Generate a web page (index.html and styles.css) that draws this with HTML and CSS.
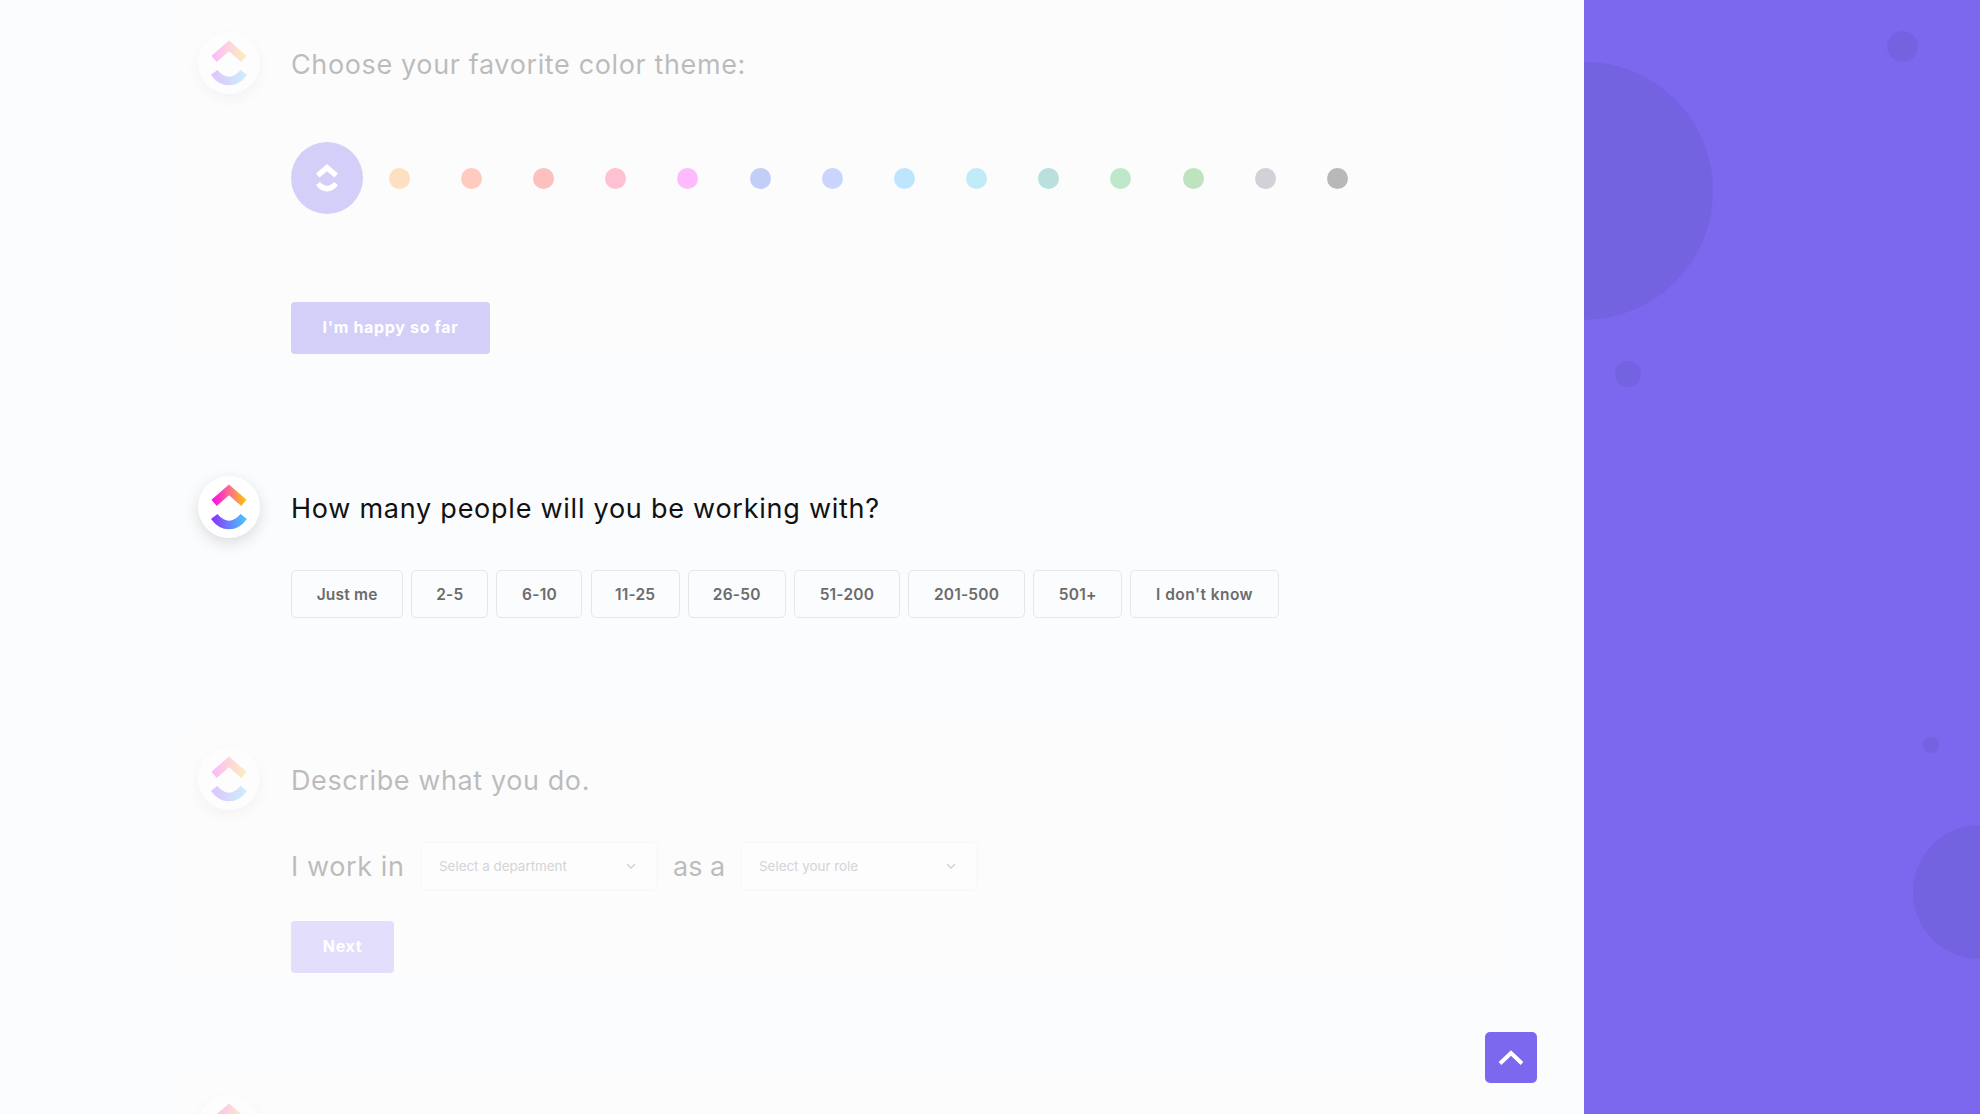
FILE: index.html
```
<!DOCTYPE html>
<html lang="en">
<head>
    <meta charset="UTF-8">
    <meta name="viewport" content="width=device-width, initial-scale=1.0">
    <title>Workspace setup</title>
    <link rel="stylesheet" href="styles.css">
</head>
<body>
    <!-- Shared logo shapes -->
    <svg class="defs" width="0" height="0" aria-hidden="true">
        <defs>
            <linearGradient id="grad-top" x1="0" y1="0" x2="1" y2="0">
                <stop offset="0" stop-color="#ff02f0"/>
                <stop offset="0.5" stop-color="#fb6c8f"/>
                <stop offset="1" stop-color="#ffc800"/>
            </linearGradient>
            <linearGradient id="grad-bottom" x1="0" y1="0" x2="1" y2="0">
                <stop offset="0" stop-color="#8930fd"/>
                <stop offset="1" stop-color="#49ccf9"/>
            </linearGradient>
            <symbol id="logo" viewBox="0 0 36 46">
                <path class="logo-top" d="M18 0.5 L0.5 15.7 L5.7 22 L18 11.2 L30.3 22 L35.5 15.7 Z"/>
                <path class="logo-bottom" d="M0 35 L6.4 30 Q18 43.3 29.6 30 L36 35 Q28.5 45.3 18 45.3 Q7.5 45.3 0 35 Z"/>
            </symbol>
        </defs>
    </svg>

    <div class="page">
        <main class="steps">
            <section class="step step-theme faded">
                <div class="avatar"><svg class="logo" width="36" height="46"><use href="#logo"/></svg></div>
                <div class="content">
                    <h2 class="title title-theme">Choose your favorite color theme:</h2>
                    <div class="colors">
                        <div class="color">
                            <span class="selected">
                                <svg class="logo-white" width="22" height="28" viewBox="0 0 22 28">
                                    <path d="M11 0 L0 9.6 L3.6 13.6 L11 7.3 L18.4 13.6 L22 9.6 Z"/>
                                    <path d="M0 21 L4 18 Q11 25.6 18 18 L22 21 Q17.5 27.5 11 27.5 Q4.5 27.5 0 21 Z"/>
                                </svg>
                            </span>
                        </div>
                        <div class="color"><span class="dot orange"></span></div>
                        <div class="color"><span class="dot coral"></span></div>
                        <div class="color"><span class="dot red"></span></div>
                        <div class="color"><span class="dot pink"></span></div>
                        <div class="color"><span class="dot magenta"></span></div>
                        <div class="color"><span class="dot indigo"></span></div>
                        <div class="color"><span class="dot blue"></span></div>
                        <div class="color"><span class="dot sky"></span></div>
                        <div class="color"><span class="dot cyan"></span></div>
                        <div class="color"><span class="dot teal"></span></div>
                        <div class="color"><span class="dot mint"></span></div>
                        <div class="color"><span class="dot green"></span></div>
                        <div class="color"><span class="dot grey"></span></div>
                        <div class="color"><span class="dot black"></span></div>
                    </div>
                    <button class="btn btn-happy">I'm happy so far</button>
                </div>
            </section>

            <section class="step step-people">
                <div class="avatar"><svg class="logo" width="36" height="46"><use href="#logo"/></svg></div>
                <div class="content">
                    <h2 class="title title-people">How many people will you be working with?</h2>
                    <div class="options">
                        <button class="option">Just me</button>
                        <button class="option">2-5</button>
                        <button class="option">6-10</button>
                        <button class="option">11-25</button>
                        <button class="option">26-50</button>
                        <button class="option">51-200</button>
                        <button class="option">201-500</button>
                        <button class="option">501+</button>
                        <button class="option option-unknown">I don't know</button>
                    </div>
                </div>
            </section>

            <section class="step step-job faded">
                <div class="avatar"><svg class="logo" width="36" height="46"><use href="#logo"/></svg></div>
                <div class="content">
                    <h2 class="title title-job">Describe what you do.</h2>
                    <div class="job-row">
                        <span class="word word-in">I work in</span>
                        <div class="select"><span class="placeholder">Select a department</span>
                            <svg class="caret" width="10" height="6" viewBox="0 0 10 6"><path d="M1 1 L5 5 L9 1"/></svg>
                        </div>
                        <span class="word word-as">as a</span>
                        <div class="select"><span class="placeholder">Select your role</span>
                            <svg class="caret" width="10" height="6" viewBox="0 0 10 6"><path d="M1 1 L5 5 L9 1"/></svg>
                        </div>
                    </div>
                    <button class="btn btn-next">Next</button>
                </div>
            </section>

            <section class="step step-last faded">
                <div class="avatar"><svg class="logo" width="36" height="46"><use href="#logo"/></svg></div>
            </section>

            <button class="to-top" aria-label="Back to top">
                <svg width="26" height="16" viewBox="0 0 26 16"><path d="M2 14.5 L13 4 L24 14.5"/></svg>
            </button>
        </main>

        <aside class="side">
            <svg width="396" height="1114" viewBox="0 0 396 1114">
                <circle cx="0" cy="190.7" r="129"/>
                <circle cx="318.5" cy="46.4" r="15.5"/>
                <circle cx="44" cy="374" r="13"/>
                <circle cx="347" cy="745" r="8"/>
                <circle cx="396" cy="892" r="67"/>
            </svg>
        </aside>
    </div>
</body>
</html>
```

FILE: styles.css
```
* {
    margin: 0;
    padding: 0;
    box-sizing: border-box;
}

body {
    font-family: Inter, "Liberation Sans", sans-serif;
    background: #fafcfe;
    color: #111;
    overflow: hidden;
}

.defs {
    position: absolute;
}

.page {
    display: flex;
    height: 1114px;
    overflow: hidden;
}

/* Left column */
.steps {
    position: relative;
    width: 1584px;
    padding: 0 83px 0 182px;
}

.step {
    display: flex;
    align-items: flex-start;
    padding-left: 15.5px;
}

.faded {
    background: #fcfcfc;
}

.faded .title,
.faded .word,
.faded .logo {
    opacity: 0.27;
}

.step-theme {
    height: 355px;
    padding-top: 31.5px;
    margin-bottom: 120.5px;
}

.step-people {
    height: 142px;
    margin-bottom: 110px;
}

.step-job {
    height: 245px;
    padding-top: 20px;
    margin-bottom: 102px;
}

.step-last {
    height: 200px;
    padding-top: 20px;
}

.avatar {
    display: flex;
    align-items: center;
    justify-content: center;
    flex: none;
    width: 62px;
    height: 62px;
    margin-right: 31.5px;
    border-radius: 50%;
    background: #fff;
    box-shadow: 0 5px 15px rgba(0, 0, 0, 0.13);
}

.faded .avatar {
    background: #fdfdfd;
    box-shadow: 0 5px 15px rgba(0, 0, 0, 0.04);
}

.logo-top {
    fill: url(#grad-top);
}

.logo-bottom {
    fill: url(#grad-bottom);
}

.logo-white path {
    fill: #fff;
}

.title {
    height: 66px;
    line-height: 66px;
    font-size: 27px;
    font-weight: 400;
    white-space: nowrap;
}

.title-theme { letter-spacing: 0.63px; }
.title-people { letter-spacing: 0.75px; }
.title-job { letter-spacing: 0.6px; }

/* Color themes */
.colors {
    display: flex;
    height: 72px;
    margin: 44.5px 0 87.5px;
}

.color {
    display: flex;
    align-items: center;
    justify-content: center;
    width: 72.18px;
}

.selected {
    display: flex;
    align-items: center;
    justify-content: center;
    width: 72px;
    height: 72px;
    border-radius: 50%;
    background: #d4cff8;
}

.dot {
    width: 21px;
    height: 21px;
    border-radius: 50%;
}

.orange { background: #fce0c0; }
.coral { background: #ffcabf; }
.red { background: #fdc0c0; }
.pink { background: #ffc0d2; }
.magenta { background: #ffbaff; }
.indigo { background: #c3cef6; }
.blue { background: #cad5fe; }
.sky { background: #bfe5fe; }
.cyan { background: #c0ebf7; }
.teal { background: #b9e0dc; }
.mint { background: #bfe8ca; }
.green { background: #bfe3bf; }
.grey { background: #d1d2d7; }
.black { background: #b8b8b8; }

.btn {
    display: block;
    height: 52px;
    padding-bottom: 1px;
    border: none;
    border-radius: 4px;
    font-family: inherit;
    font-size: 16px;
    font-weight: 700;
    letter-spacing: 0.67px;
    color: #fff;
}

.btn-happy {
    width: 199px;
    background: #d4cff8;
}

.btn-next {
    width: 103px;
    background: #e3defb;
}

/* Team size */
.options {
    display: grid;
    grid-template-columns: 112.2px 77px 86px 89px 98px 106px 117px 89px 148.5px;
    column-gap: 8.15px;
    margin-top: 28.5px;
}

.option {
    height: 48px;
    border: 1px solid #e6e7ea;
    border-radius: 5px;
    background: transparent;
    font-family: inherit;
    font-size: 15.5px;
    font-weight: 600;
    letter-spacing: 0.2px;
    color: #6b6b6b;
    white-space: nowrap;
}

.option-unknown {
    letter-spacing: 0.45px;
}

/* Department and role */
.job-row {
    display: flex;
    align-items: center;
    height: 47px;
    margin: 29px 0 31px;
}

.word {
    font-size: 27px;
    font-weight: 400;
    letter-spacing: 0.6px;
    white-space: nowrap;
}

.word-in { width: 131px; }
.word-as { width: 86px; padding-left: 17px; letter-spacing: 0; }

.select {
    display: flex;
    align-items: center;
    justify-content: space-between;
    width: 234px;
    height: 46px;
    padding: 0 20px 1px 17px;
    border-radius: 3px;
    background: #fdfdfd;
    box-shadow: 0 0 4px rgba(0, 0, 0, 0.04);
}

.placeholder {
    font-size: 13.4px;
    color: #d3d4d8;
    white-space: nowrap;
}

.caret path {
    fill: none;
    stroke: #d0d1d5;
    stroke-width: 1.3;
}

/* Floating button over the steps */
.to-top {
    position: absolute;
    left: 1485px;
    top: 1031.5px;
    display: flex;
    align-items: center;
    justify-content: center;
    width: 51.5px;
    height: 51.5px;
    border: none;
    border-radius: 5px;
    background: #7b68ee;
}

.to-top path {
    fill: none;
    stroke: #fff;
    stroke-width: 4;
}

/* Right panel */
.side {
    width: 396px;
    background: #7b68ee;
}

.side svg {
    display: block;
}

.side circle {
    fill: #7363e0;
}
```
